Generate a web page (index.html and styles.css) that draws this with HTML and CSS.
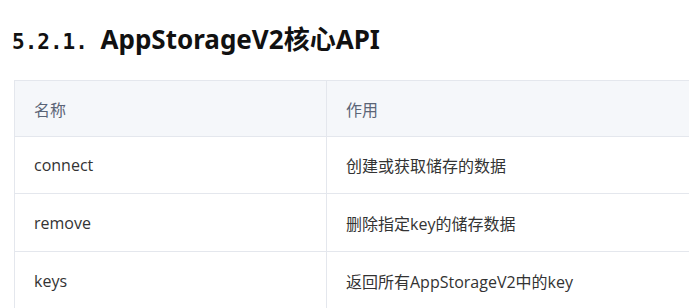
FILE: index.html
```html
<!DOCTYPE html>
<html lang="zh">
<head>
<meta charset="utf-8">
<link rel="stylesheet" href="styles.css">
</head>
<body>
<div class="page">
  <h4 class="title"><span class="num">5.2.1. </span>AppStorageV2核心API</h4>
  <div class="table-wrap">
    <table class="api">
      <thead>
        <tr><th class="c1">名称</th><th>作用</th></tr>
      </thead>
      <tbody>
        <tr class="r1"><td>connect</td><td>创建或获取储存的数据</td></tr>
        <tr class="r2"><td>remove</td><td>删除指定key的储存数据</td></tr>
        <tr class="r3"><td>keys</td><td>返回所有AppStorageV2中的key</td></tr>
      </tbody>
    </table>
  </div>
</div>
</body>
</html>
```
FILE: styles.css
```css
html, body {
  margin: 0;
  padding: 0;
  background: #fff;
  overflow: hidden;
}
.page {
  width: 689px;
  height: 308px;
  overflow: hidden;
}
.title {
  margin: 0;
  padding: 24px 0 0 12px;
  height: 80px;
  box-sizing: border-box;
  font-family: "Noto Sans", "Noto Sans CJK SC", sans-serif;
  font-weight: 700;
  font-size: 26px;
  line-height: 30px;
  color: #111;
}
.num {
  font-family: "DejaVu Sans Mono", monospace;
  font-size: 21px;
}
.table-wrap {
  padding-left: 14px;
}
.api {
  border-collapse: collapse;
  width: 760px;
  font-family: "Open Sans", "Noto Sans CJK SC", sans-serif;
  font-size: 16px;
  color: #333;
}
.api th, .api td {
  border: 1px solid #e4e7ed;
  text-align: left;
  padding: 0 0 0 19px;
  font-weight: 400;
}
.api th {
  background: #f5f7fa;
  color: #5b6577;
  height: 55px;
}
.api .c1 {
  width: 292px;
}
.api .r1 td { height: 56px; }
.api .r2 td { height: 57px; }
.api .r3 td { height: 57px; }
```
